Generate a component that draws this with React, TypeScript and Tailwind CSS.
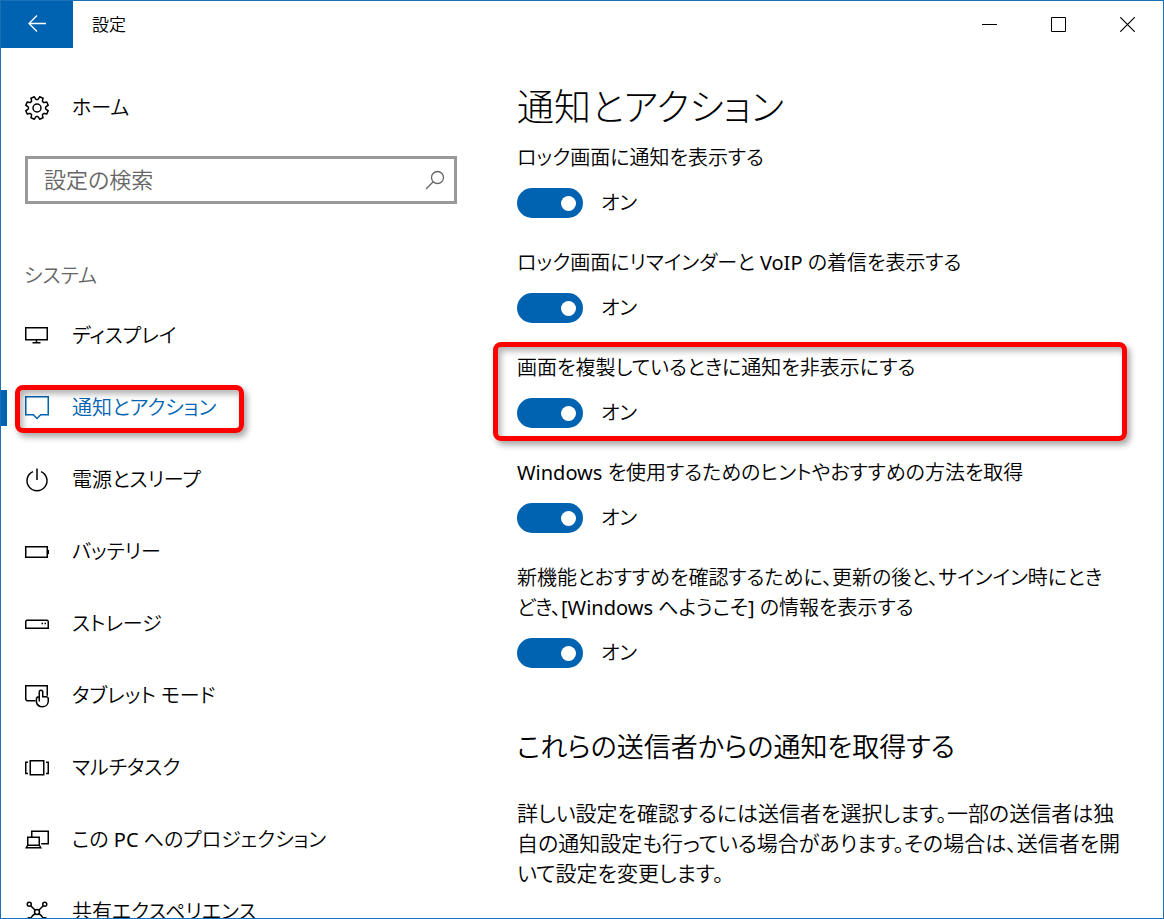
import { useState } from 'react';
import type { ReactNode } from 'react';

interface NavEntry {
  id: string;
  label: string;
  icon: ReactNode;
}

interface Setting {
  id: string;
  label: ReactNode;
  highlighted?: boolean;
}

function Icon({ children }: { children: ReactNode }) {
  return (
    <svg
      width="24"
      height="24"
      viewBox="0 0 24 24"
      fill="none"
      stroke="currentColor"
      strokeWidth="1.5"
      className="shrink-0"
      aria-hidden="true"
    >
      {children}
    </svg>
  );
}

// Eight teeth, the first pair sits left and right of the vertical axis
const gearPoints = Array.from({ length: 8 }, (_, i) => {
  const mid = ((i * 45 + 22.5) * Math.PI) / 180;
  const corners: [number, number][] = [
    [-0.3, 8.6],
    [-0.23, 9.4],
    [-0.16, 11.5],
    [0.16, 11.5],
    [0.23, 9.4],
    [0.3, 8.6],
  ];
  return corners
    .map(([a, r]) => `${(12 + r * Math.cos(mid + a)).toFixed(2)},${(12 + r * Math.sin(mid + a)).toFixed(2)}`)
    .join(' ');
}).join(' ');

const navEntries: NavEntry[] = [
  {
    id: 'display',
    label: 'ディスプレイ',
    icon: (
      <Icon>
        <path d="M.75 3.75h21.5v12H.75zM11.5 16v3M7.5 18.75h8" />
      </Icon>
    ),
  },
  {
    id: 'notifications',
    label: '通知とアクション',
    icon: (
      <Icon>
        <path d="M.75.75h22.5v18h-7.5L12 22.5l-3.75-3.75H.75z" />
      </Icon>
    ),
  },
  {
    id: 'power',
    label: '電源とスリープ',
    icon: (
      <Icon>
        <path d="M12 .5v11.5M8 3.6a10 10 0 1 0 8 0" />
      </Icon>
    ),
  },
  {
    id: 'battery',
    label: 'バッテリー',
    icon: (
      <Icon>
        <path d="M.75 6.75h21.5v10.5H.75zM23.25 10v4" />
      </Icon>
    ),
  },
  {
    id: 'storage',
    label: 'ストレージ',
    icon: (
      <Icon>
        <path d="M1.75 8.25h20.5l1 1v7H.75v-7zM16.5 11.5H18M19.5 11.5H21" />
      </Icon>
    ),
  },
  {
    id: 'tablet',
    label: 'タブレット モード',
    icon: (
      <Icon>
        <path d="M10.5 16.75H2l-1.25-1.25V1.75h21.5v10" />
        <path d="M14.25 17.5V8a1.75 1.75 0 0 1 3.5 0v4.75h4l1.5 1.25v3.5a5.75 5.75 0 0 1-5.75 5.25c-3.5 0-5.5-1.75-6.1-4.75v-3c0-1.5 1.35-2.25 2.85-2.25" />
      </Icon>
    ),
  },
  {
    id: 'multitask',
    label: 'マルチタスク',
    icon: (
      <Icon>
        <path d="M5.25 4.75h13.5v14H5.25zM3 6.25H.75V17.5H3M21 6.25h2.25V17.5H21" />
      </Icon>
    ),
  },
  {
    id: 'projection',
    label: 'この PC へのプロジェクション',
    icon: (
      <Icon>
        <path d="M6.75 8.5V3.25h16.5v12.5h-7M2.75 9.25h11.5v8H2.75zM2.5 17.5l-1.25 2.25h14.5l-1.25-2.25" />
      </Icon>
    ),
  },
  {
    id: 'shared',
    label: '共有エクスペリエンス',
    icon: (
      <Icon>
        <circle cx="4.25" cy="4.25" r="2" />
        <circle cx="19.75" cy="4.25" r="2" />
        <circle cx="12" cy="12" r="2.5" />
        <circle cx="4.25" cy="19.75" r="2" />
        <circle cx="19.75" cy="19.75" r="2" />
        <path d="M5.75 5.75l4.5 4.5M18.25 5.75l-4.5 4.5M5.75 18.25C7 16 8 15 10 13.75M18.25 18.25C17 16 16 15 14 13.75" />
      </Icon>
    ),
  },
];

const settings: Setting[] = [
  { id: 'lock-notifications', label: 'ロック画面に通知を表示する' },
  { id: 'lock-reminders', label: 'ロック画面にリマインダーと VoIP の着信を表示する' },
  { id: 'hide-duplicating', label: '画面を複製しているときに通知を非表示にする', highlighted: true },
  { id: 'tips', label: 'Windows を使用するためのヒントやおすすめの方法を取得' },
  {
    id: 'welcome',
    label: (
      <>
        新機能とおすすめを確認するために、更新の後と、サインイン時にとき
        <br />
        どき、[Windows へようこそ] の情報を表示する
      </>
    ),
  },
];

function Highlight({ className }: { className: string }) {
  return (
    <div
      className={`pointer-events-none absolute rounded-lg border-5 border-[#ff0000] shadow-[3px_4px_6px_rgba(0,0,0,0.35),inset_3px_4px_6px_rgba(0,0,0,0.3)] ${className}`}
    />
  );
}

function TitleBar() {
  return (
    <header className="flex h-[47px] shrink-0 items-stretch pr-px">
      <button type="button" aria-label="戻る" className="flex w-[72px] items-center justify-center bg-[#0063b1] text-white">
        <svg width="18" height="19" viewBox="0 0 18 19" fill="none" stroke="currentColor" strokeWidth="1.3">
          <path d="M18 8.5H1M9 .5l-8 8 8 8" />
        </svg>
      </button>
      <h1 className="flex flex-1 items-center pl-[19px] text-[17px]">設定</h1>
      <button type="button" aria-label="最小化" className="flex w-[69px] items-center justify-center">
        <svg width="15" height="15" viewBox="0 0 15 15" stroke="currentColor">
          <path d="M0 7.5h15" />
        </svg>
      </button>
      <button type="button" aria-label="最大化" className="flex w-[69px] items-center justify-center">
        <svg width="15" height="15" viewBox="0 0 15 15" fill="none" stroke="currentColor">
          <path d="M.5.5h14v14H.5z" />
        </svg>
      </button>
      <button type="button" aria-label="閉じる" className="flex w-[69px] items-center justify-center">
        <svg width="15" height="15" viewBox="0 0 15 15" stroke="currentColor" strokeWidth="1.2">
          <path d="M.25.25l14.5 14.5M14.75.25L.25 14.75" />
        </svg>
      </button>
    </header>
  );
}

function Sidebar() {
  const [active, setActive] = useState('notifications');

  return (
    <aside className="w-[456px] shrink-0 pt-6">
      <a href="#home" className="flex h-[72px] items-center gap-[23px] pl-6">
        <Icon>
          <polygon points={gearPoints} strokeLinejoin="round" />
          <circle cx="12" cy="12" r="4" />
        </Icon>
        ホーム
      </a>
      <div className="mt-3 ml-6 flex h-12 items-center border-3 border-[#999999] pr-[9px]">
        <input
          type="search"
          aria-label="設定の検索"
          placeholder="設定の検索"
          className="min-w-0 flex-1 pb-0.5 pl-4 text-[22px] outline-none placeholder:text-[#666666]"
        />
        <svg width="20" height="20" viewBox="0 0 20 20" fill="none" stroke="#666666" strokeWidth="1.3" aria-hidden="true">
          <circle cx="12.5" cy="7.5" r="6" />
          <path d="M8.2 11.8L1 19" />
        </svg>
      </div>
      <h2 className="mt-14 pb-2.5 pl-[23px] leading-8 text-[#666666]">システム</h2>
      <nav className="-mt-0.5">
        {navEntries.map((entry) => (
          <div key={entry.id} className="relative">
            <a
              href={`#${entry.id}`}
              onClick={() => setActive(entry.id)}
              className={`flex h-[72px] items-center gap-[23px] pl-6 ${active === entry.id ? 'text-[#0063b1]' : ''}`}
            >
              {entry.icon}
              {entry.label}
            </a>
            {active === entry.id && <span className="absolute top-[18px] left-0 h-9 w-1.5 bg-[#0063b1]" />}
            {entry.id === 'notifications' && <Highlight className="top-[13px] left-3.5 h-12 w-[229px]" />}
          </div>
        ))}
      </nav>
    </aside>
  );
}

function SettingRow({ setting }: { setting: Setting }) {
  const [on, setOn] = useState(true);

  return (
    <div className="relative">
      <label htmlFor={setting.id} className="block leading-[30px] whitespace-nowrap">
        {setting.label}
      </label>
      <div className="mt-[15px] flex h-[30px] items-center gap-[18px]">
        <input
          id={setting.id}
          type="checkbox"
          role="switch"
          checked={on}
          onChange={(e) => setOn(e.target.checked)}
          className="flex h-[30px] w-[66px] appearance-none items-center rounded-full bg-[#999999] px-[7px] before:size-[15px] before:rounded-full before:bg-white checked:justify-end checked:bg-[#0063b1]"
        />
        <span>{on ? 'オン' : 'オフ'}</span>
      </div>
      {setting.highlighted && <Highlight className="-top-[11px] right-0 -bottom-[13px] -left-6" />}
    </div>
  );
}

export default function App() {
  return (
    <div className="flex h-screen flex-col overflow-hidden border border-[#1a6fb5] bg-white font-['Noto_Sans','Noto_Sans_CJK_JP_DemiLight','Noto_Sans_CJK_JP',sans-serif] text-[20px] leading-[30px] font-normal text-black [font-feature-settings:'palt']">
      <TitleBar />
      <div className="flex min-h-0 flex-1">
        <Sidebar />
        <main className="min-w-0 flex-1 pt-[30px] pr-9 pl-[60px]">
          <h2 className="mb-2.5 font-['Noto_Sans_CJK_JP',sans-serif] text-[37px] leading-[55px] font-light">
            通知とアクション
          </h2>
          <div className="space-y-[30px]">
            {settings.map((setting) => (
              <SettingRow key={setting.id} setting={setting} />
            ))}
          </div>
          <h3 className="mt-[59px] text-[27px] leading-10">これらの送信者からの通知を取得する</h3>
          <p className="mt-[31px] text-[21px] leading-[30px] whitespace-nowrap">
            詳しい設定を確認するには送信者を選択します。一部の送信者は独
            <br />
            自の通知設定も行っている場合があります。その場合は、送信者を開
            <br />
            いて設定を変更します。
          </p>
        </main>
      </div>
    </div>
  );
}
